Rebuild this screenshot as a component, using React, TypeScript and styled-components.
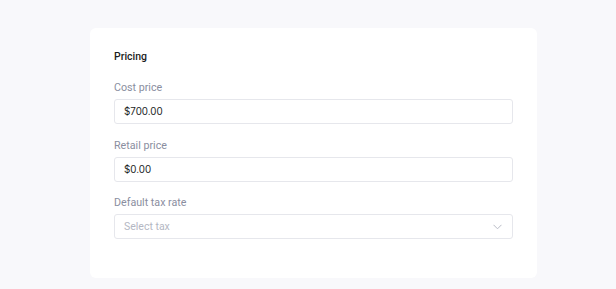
import React from "react";
import styled, { createGlobalStyle } from "styled-components";

const Global = createGlobalStyle`
  html, body { margin: 0; padding: 0; background: #f8f8fb; }
  body { font-family: Roboto, "Noto Sans", sans-serif; }
  * { box-sizing: border-box; }
`;

const Page = styled.div`
  width: 616px;
  height: 289px;
  padding: 28px 79px 11px 90px;
  background: #f8f8fb;
`;

const Card = styled.section`
  background: #ffffff;
  border-radius: 6px;
  height: 250px;
  padding: 21px 24px 0 24px;
  display: flex;
  flex-direction: column;
`;

const Title = styled.h2`
  margin: 0 0 15px 0;
  font-size: 10.5px;
  line-height: 16px;
  font-weight: 500;
  color: #1c1d22;
`;

const Fields = styled.div`
  display: flex;
  flex-direction: column;
  gap: 13.5px;
`;

const Field = styled.div`
  display: flex;
  flex-direction: column;
  gap: 3px;
`;

const Label = styled.label`
  font-size: 10.7px;
  line-height: 16px;
  color: #8a8ea0;
`;

const Box = styled.div<{ $placeholder?: boolean }>`
  height: 25px;
  border: 1px solid #e6e7ec;
  border-radius: 3px;
  padding: 0 9px;
  display: flex;
  align-items: center;
  justify-content: space-between;
  font-size: ${(p) => (p.$placeholder ? "10.5px" : "9.8px")};
  font-family: ${(p) => (p.$placeholder ? "Roboto" : "Inter")}, "Noto Sans", sans-serif;
  color: ${(p) => (p.$placeholder ? "#b4b7c3" : "#1d1f26")};
`;

const Chevron = styled.svg`
  width: 9px;
  height: 6px;
  margin-right: 1px;
`;

export default function App() {
  return (
    <>
      <Global />
      <Page>
        <Card>
          <Title>Pricing</Title>
          <Fields>
            <Field>
              <Label>Cost price</Label>
              <Box>$700.00</Box>
            </Field>
            <Field>
              <Label>Retail price</Label>
              <Box>$0.00</Box>
            </Field>
            <Field>
              <Label>Default tax rate</Label>
              <Box $placeholder>
                <span>Select tax</span>
                <Chevron viewBox="0 0 9 6" fill="none">
                  <path d="M0.5 0.8 L4.5 4.8 L8.5 0.8" stroke="#b8bbc6" strokeWidth="1" />
                </Chevron>
              </Box>
            </Field>
          </Fields>
        </Card>
      </Page>
    </>
  );
}
